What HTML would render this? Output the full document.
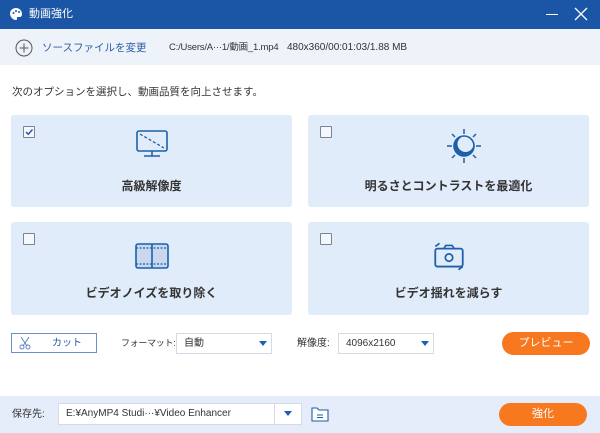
<!DOCTYPE html><html><head><meta charset="utf-8"><style>
*{margin:0;padding:0;box-sizing:border-box}
body{width:600px;height:433px;overflow:hidden;background:#fff;font-family:"Liberation Sans","Noto Sans CJK JP",sans-serif;position:relative;color:#333;line-height:1}
.a{position:absolute;white-space:nowrap}
.card{position:absolute;background:#e1ecfa;border-radius:3px}
.cb{position:absolute;left:12px;top:11px;width:12px;height:12px;border:1px solid #7a8594;background:#f4f7fb;border-radius:1px}
.lbl{position:absolute;left:0;right:0;top:65px;text-align:center;font-size:12px;font-weight:bold;color:#333}
.ic{position:absolute;left:50%;top:14px;transform:translateX(-50%)}
.sel{position:absolute;background:#fff;border:1px solid #d3dbe6;font-size:10px;color:#333;height:21px;line-height:19px;padding-left:7px;white-space:nowrap}
.tri{position:absolute;width:0;height:0;border-left:4px solid transparent;border-right:4px solid transparent;border-top:5px solid #1d5fb4}
.btn{position:absolute;background:#f7781f;color:#fff;font-size:11px;text-align:center;border-radius:12px;height:23px;line-height:23px}
</style></head><body>
<div class="a" style="left:0;top:0;width:600px;height:29px;background:#1b56a6"></div>
<svg class="a" style="left:9px;top:7px" width="14" height="14" viewBox="0 0 14 14"><path d="M7 1C3.5 1 1 3.5 1 6.5 1 9.5 3.5 13 7 13c1 0 1.3-.8 1-1.5-.4-.8 0-1.5 1-1.5h1.5C12 10 13 9 13 7 13 3.7 10.3 1 7 1z" fill="#fff"/><circle cx="4.5" cy="6" r="1" fill="#1b56a6"/><circle cx="7" cy="4" r="1" fill="#1b56a6"/><circle cx="10" cy="5" r="1" fill="#1b56a6"/></svg>
<div class="a" style="left:29px;top:9px;font-size:11px;color:#fff">動画強化</div>
<div class="a" style="left:546px;top:14px;width:12px;height:1px;background:#fff"></div>
<svg class="a" style="left:574px;top:7px" width="14" height="14"><path d="M1 1L13 13M13 1L1 13" stroke="#fff" stroke-width="1.3"/></svg>
<div class="a" style="left:0;top:29px;width:600px;height:36px;background:#eef3fa"></div>
<svg class="a" style="left:15px;top:39px" width="18" height="18"><circle cx="9" cy="9" r="8" fill="none" stroke="#555" stroke-width="1"/><path d="M9 4.5V13.5M4.5 9H13.5" stroke="#555" stroke-width="1"/></svg>
<div class="a" style="left:42px;top:43px;font-size:10.5px;color:#2a5da8">ソースファイルを変更</div>
<div class="a" style="left:169px;top:43px;font-size:9.5px;letter-spacing:-0.2px;color:#333">C:/Users/A···1/動画_1.mp4</div>
<div class="a" style="left:287px;top:43px;font-size:10px;color:#333">480x360/00:01:03/1.88 MB</div>
<div class="a" style="left:12px;top:87px;font-size:10.5px;color:#333">次のオプションを選択し、動画品質を向上させます。</div>

<div class="card" style="left:11px;top:115px;width:281px;height:92px"><div class="cb"><svg width="10" height="10" style="position:absolute;left:0;top:0"><path d="M2 5L4.3 7.3 8.5 2.5" stroke="#2a5da8" stroke-width="1.5" fill="none"/></svg></div>
<svg class="ic" width="34" height="30"><rect x="2" y="2" width="30" height="20" rx="2" fill="none" stroke="#1d5fa8" stroke-width="1.6"/><path d="M5 5L29 19" stroke="#1d5fa8" stroke-width="1.3" stroke-dasharray="3 2"/><path d="M17 22V27M9 27H25" stroke="#1d5fa8" stroke-width="1.6"/></svg>
<div class="lbl">高級解像度</div></div>

<div class="card" style="left:308px;top:115px;width:281px;height:92px"><div class="cb"></div>
<svg class="ic" style="left:137px;top:12px;transform:none" width="38" height="38" viewBox="0 0 38 38"><g stroke="#1d5fa8" stroke-width="1.5"><path d="M19 2V7M19 31V36M2 19H7M31 19H36M7 7L10 10M28 28L31 31M7 31L10 28M28 10L31 7"/></g><circle cx="19" cy="19" r="10" fill="#1d5fa8"/><circle cx="20.5" cy="17" r="8" fill="#e1ecfa"/><circle cx="19" cy="19" r="10" fill="none" stroke="#1d5fa8" stroke-width="1.6"/></svg>
<div class="lbl">明るさとコントラストを最適化</div></div>

<div class="card" style="left:11px;top:222px;width:281px;height:93px"><div class="cb"></div>
<svg class="ic" style="top:20px" width="36" height="28"><rect x="2" y="2" width="32" height="24" rx="2" fill="#c9d8ee" stroke="#1d5fa8" stroke-width="1.6"/><path d="M2 6H34M2 22H34" stroke="#1d5fa8" stroke-width="1.2" stroke-dasharray="2 1.5"/><path d="M18 2V26" stroke="#1d5fa8" stroke-width="1.6"/></svg>
<div class="lbl">ビデオノイズを取り除く</div></div>

<div class="card" style="left:308px;top:222px;width:281px;height:93px"><div class="cb"></div>
<svg class="ic" style="top:16px" width="38" height="36" viewBox="0 0 36 34"><path d="M5 8L9 5M27 30L31 27" stroke="#1d5fa8" stroke-width="1.6"/><rect x="5" y="10" width="26" height="17" rx="2" fill="none" stroke="#1d5fa8" stroke-width="1.7"/><path d="M13 10L15 7H21L23 10" fill="none" stroke="#1d5fa8" stroke-width="1.5"/><circle cx="18" cy="18.5" r="3.5" fill="none" stroke="#1d5fa8" stroke-width="1.6"/></svg>
<div class="lbl">ビデオ揺れを減らす</div></div>

<div class="a" style="left:11px;top:333px;width:86px;height:20px;border:1px solid #6a8fc4;background:#fff"></div>
<svg class="a" style="left:18px;top:336px" width="14" height="14"><path d="M3 1L9 10M11 1L5 10" stroke="#5b86c0" stroke-width="1"/><circle cx="4" cy="11" r="2" fill="none" stroke="#5b86c0"/><circle cx="10" cy="11" r="2" fill="none" stroke="#5b86c0"/></svg>
<div class="a" style="left:52px;top:339px;font-size:10px;color:#2a5da8">カット</div>
<div class="a" style="left:121px;top:339px;font-size:9px;letter-spacing:-0.3px;color:#333">フォーマット:</div>
<div class="sel" style="left:176px;top:333px;width:96px">自動</div><div class="tri" style="left:259px;top:341px"></div>
<div class="a" style="left:297px;top:339px;font-size:10px;color:#333">解像度:</div>
<div class="sel" style="left:338px;top:333px;width:96px">4096x2160</div><div class="tri" style="left:421px;top:341px"></div>
<div class="btn" style="left:502px;top:332px;width:88px">プレビュー</div>

<div class="a" style="left:0;top:396px;width:600px;height:37px;background:#e4edf9"></div>
<div class="a" style="left:12px;top:410px;font-size:10px;color:#333">保存先:</div>
<div class="sel" style="left:58px;top:403px;width:244px;height:22px;line-height:20px">E:¥AnyMP4 Studi···¥Video Enhancer</div>
<div class="a" style="left:274px;top:404px;width:1px;height:20px;background:#d3dbe6"></div>
<div class="tri" style="left:284px;top:411px"></div>
<svg class="a" style="left:310px;top:405px" width="20" height="18"><path d="M2 3H7L9 5H18V16H2Z" fill="#fff" stroke="#1d5fa8" stroke-width="1.1"/><path d="M7 10H13M7 12.5H13" stroke="#1d5fa8"/></svg>
<div class="btn" style="left:499px;top:403px;width:88px">強化</div>
</body></html>
